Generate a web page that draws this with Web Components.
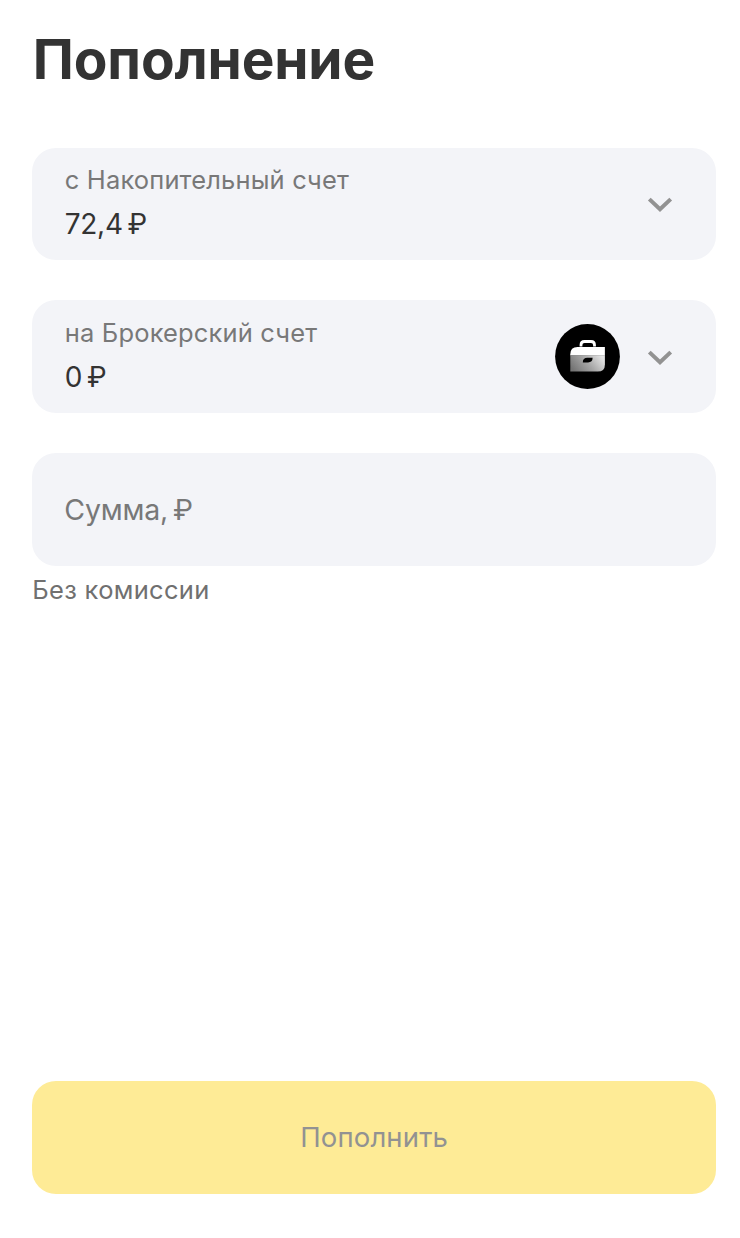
<!DOCTYPE html>
<html lang="ru">
<head>
<meta charset="utf-8">
<title>Пополнение</title>
<style>
	body {
		margin: 0;
		background: #fff;
		font-family: Inter, "Liberation Sans", sans-serif;
		--color-text: #333;
		--color-secondary: #787878;
		--color-field: #f3f4f8;
		--color-button: #feeb96;
		--color-disabled: #929292;
		--radius: 24px;
		--field-height: 112.5px;
	}
</style>
</head>
<body>
<top-up-form>
	<span slot="title">Пополнение</span>
	<account-select>
		<span slot="label">с Накопительный счет</span>
		<span slot="value">72,4&thinsp;₽</span>
	</account-select>
	<account-select>
		<span slot="label">на Брокерский счет</span>
		<span slot="value">0&thinsp;₽</span>
		<briefcase-icon slot="icon"></briefcase-icon>
	</account-select>
	<amount-field>
		Сумма,&thinsp;₽
		<span slot="hint">Без комиссии</span>
	</amount-field>
	<submit-button slot="footer">Пополнить</submit-button>
</top-up-form>

<script>
function define(name, css, html) {
	const template = document.createElement('template');
	template.innerHTML = `<style>* { box-sizing: border-box; } ${css}</style>${html}`;

	window.customElements.define(name, class extends HTMLElement {
		constructor() {
			super();
			const shadowRoot = this.attachShadow({ mode: 'open' });
			shadowRoot.appendChild(template.content.cloneNode(true));
		}
	});
}

define('chevron-icon', /* css */ `
	:host { display: block; width: 26px; height: 18px; }
	svg { display: block; }
`, /* html */ `
	<svg width="26" height="18" viewBox="0 0 26 18" fill="none">
		<path d="M2.3 4.1 13 14.2 23.7 4.1" stroke="#929292" stroke-width="4"/>
	</svg>
`);

define('briefcase-icon', /* css */ `
	:host { display: block; width: 65px; height: 65px; }
	svg { display: block; }
`, /* html */ `
	<svg width="65" height="65" viewBox="0 0 65 65">
		<defs>
			<linearGradient id="body" x1="0" y1=".7" x2="1" y2=".3">
				<stop offset="0" stop-color="#747474"/>
				<stop offset=".5" stop-color="#a5a5a5"/>
				<stop offset="1" stop-color="#e4e4e4"/>
			</linearGradient>
		</defs>
		<circle cx="32.5" cy="32.5" r="32.4" fill="#000"/>
		<path d="M26 22.4v-1.4q0-3.500 3.500-3.500h6.500q3.500 0 3.500 3.500v1.400" fill="none" stroke="#fff" stroke-width="2.800"/>
		<path d="M15.3 31.5v-1.2q0-7.3 7.3-7.3h27.3v8.5z" fill="#fff"/>
		<path d="M15.3 31.2h34.6v9.2q0 7.200-7.200 7.200H15.3z" fill="url(#body)"/>
		<path d="M27.8 38.400q0-4.600 4.600-4.600h5.200q0 4.600-4.600 4.600z" fill="#000"/>
	</svg>
`);

define('account-select', /* css */ `
	:host {
		display: flex;
		box-sizing: border-box;
		align-items: center;
		height: var(--field-height);
		padding: 0 43px 0 32.5px;
		border-radius: var(--radius);
		background: var(--color-field);
	}

	.text {
		flex: 1;
		padding-bottom: 4px;
	}

	.label, .value {
		line-height: 44px;
		white-space: nowrap;
	}

	.label {
		color: var(--color-secondary);
		font-size: 25.5px;
		letter-spacing: 0.15px;
	}

	.value {
		color: var(--color-text);
		font-size: 28px;
		letter-spacing: -0.3px;
	}

	chevron-icon { margin-left: 27px; }
`, /* html */ `
	<div class="text">
		<div class="label"><slot name="label"></slot></div>
		<div class="value"><slot name="value"></slot></div>
	</div>
	<slot name="icon"></slot>
	<chevron-icon></chevron-icon>
`);

define('amount-field', /* css */ `
	:host { display: block; }

	.box {
		display: flex;
		align-items: center;
		height: var(--field-height);
		padding: 0 32px;
		border-radius: var(--radius);
		background: var(--color-field);
		color: var(--color-secondary);
		font-size: 28.5px;
		letter-spacing: -0.2px;
	}

	.hint {
		padding-top: 5.5px;
		color: #707070;
		font-size: 25.5px;
		line-height: 38px;
		letter-spacing: 0.3px;
	}
`, /* html */ `
	<div class="box"><div><slot></slot></div></div>
	<div class="hint"><slot name="hint"></slot></div>
`);

define('submit-button', /* css */ `
	:host { display: block; }

	button {
		display: block;
		width: 100%;
		height: var(--field-height);
		padding: 0;
		border: 0;
		border-radius: var(--radius);
		background: var(--color-button);
		color: var(--color-disabled);
		font: inherit;
		font-size: 27.5px;
		letter-spacing: 0.15px;
	}
`, /* html */ `
	<button type="button" disabled><slot></slot></button>
`);

define('top-up-form', /* css */ `
	:host {
		display: flex;
		box-sizing: border-box;
		flex-direction: column;
		height: 1238px;
		padding: 25px 24px 44.5px 32.3px;
	}

	h1 {
		margin: 0 0 54.6px;
		padding-left: 0.5px;
		color: var(--color-text);
		font-size: 55px;
		font-weight: 700;
		line-height: 68px;
		letter-spacing: -0.15px;
	}

	.fields {
		display: flex;
		flex: 1;
		flex-direction: column;
		gap: 40.3px;
	}
`, /* html */ `
	<h1><slot name="title"></slot></h1>
	<div class="fields"><slot></slot></div>
	<slot name="footer"></slot>
`);
</script>
</body>
</html>
